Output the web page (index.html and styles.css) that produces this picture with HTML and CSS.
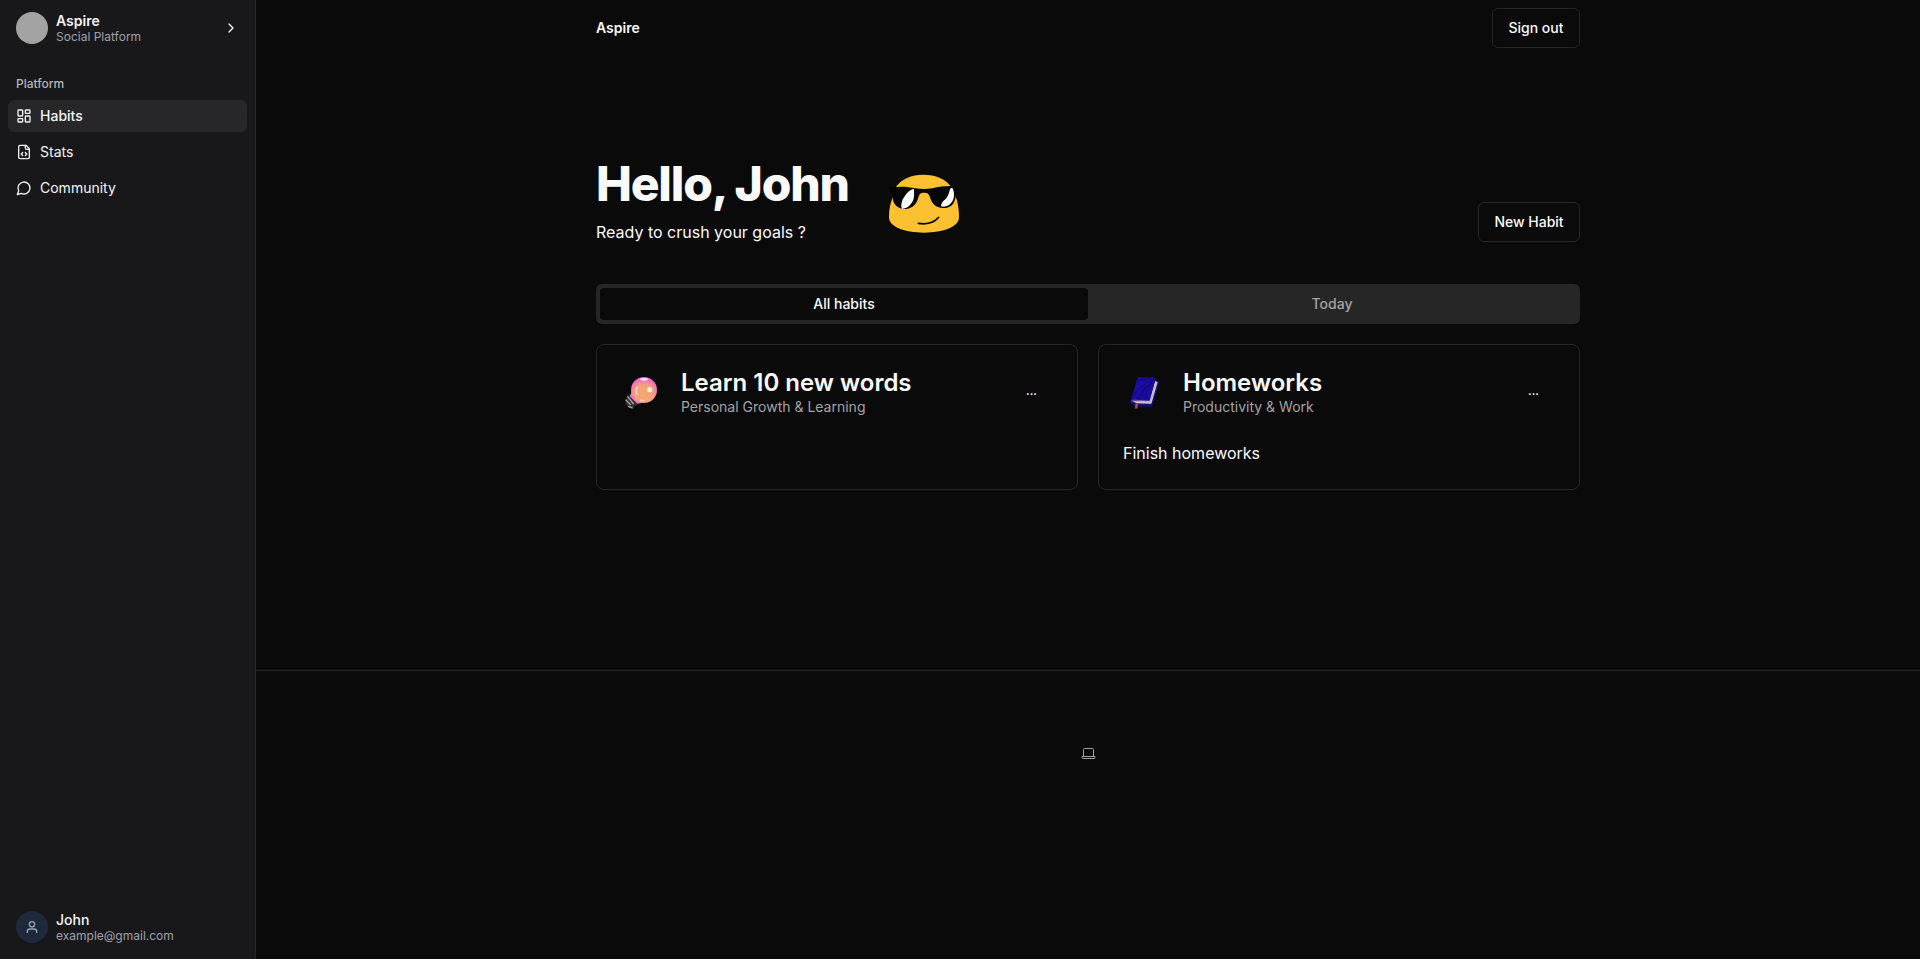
FILE: index.html
```html
<!DOCTYPE html>
<html lang="en">
<head>
<meta charset="utf-8">
<title>Aspire</title>
<link rel="stylesheet" href="styles.css">
</head>
<body>
<div class="app">
  <aside class="sidebar">
    <div class="account">
      <span class="avatar"></span>
      <div class="account-text"><strong class="brand">Aspire</strong><span class="sub social">Social Platform</span></div>
      <svg class="icon chevron" viewBox="0 0 24 24"><path d="m9 18 6-6-6-6"/></svg>
    </div>
    <nav class="nav">
      <div class="nav-label">Platform</div>
      <a class="nav-item active"><svg class="icon" viewBox="0 0 24 24"><rect width="7" height="9" x="3" y="3" rx="1"/><rect width="7" height="5" x="14" y="3" rx="1"/><rect width="7" height="9" x="14" y="12" rx="1"/><rect width="7" height="5" x="3" y="16" rx="1"/></svg><span class="t-habits">Habits</span></a>
      <a class="nav-item"><svg class="icon" viewBox="0 0 24 24"><path d="M10 12.5 8 15l2 2.500M14 12.500l2 2.500-2 2.500M14 2v4a2 2 0 0 0 2 2h4"/><path d="M15 2H6a2 2 0 0 0-2 2v16a2 2 0 0 0 2 2h12a2 2 0 0 0 2-2V7z"/></svg><span class="t-stats">Stats</span></a>
      <a class="nav-item"><svg class="icon" viewBox="0 0 24 24"><path d="M7.900 20A9 9 0 1 0 4 16.100L2 22Z"/></svg><span class="t-community">Community</span></a>
    </nav>
    <div class="account user">
      <span class="avatar avatar-user"><svg viewBox="0 0 24 24"><circle cx="12" cy="8" r="4"/><path d="M5 21v-2a4 4 0 0 1 4-4h6a4 4 0 0 1 4 4v2"/></svg></span>
      <div class="account-text"><span class="name">John</span><span class="sub email">example@gmail.com</span></div>
    </div>
  </aside>
  <div class="page">
    <header class="topbar"><span class="site">Aspire</span><button class="btn signout">Sign out</button></header>
    <main class="main">
      <section class="hero">
        <div class="greeting"><h1>Hello, John</h1><p>Ready to crush your goals ?</p></div>
        <svg class="emoji" viewBox="0 0 270 225">
          <path fill="#fcc131" d="M46 68C64 42 94 29 130 29s69 13 85 39l16 38c3 12 6 31 6 51 0 29-47 46-105 46S27 186 27 157c0-20 3-39 8-51z"/>
          <path fill="#050503" d="M30 67c28-3 52-3 76 3 17 3 34 3 51 0 24-6 48-8 77-6l-1 15-5 4c-1 27-10 43-32 46-25 2-39-9-46-32-4-12-7-14-19-14-10 0-13 4-16 15-7 24-22 34-44 34-23-2-34-17-35-47l-5-4z"/>
          <path fill="#fff" d="M102 71c1 20 1 33-8 44-8 12-17 17-29 16-3-12 0-25 8-36 8-13 17-21 29-24zM217 68c8 15 6 33-2 44-8 11-19 15-32 12 0-9 6-16 14-22 7-7 10-17 12-26 1-6 4-8 8-8z"/>
          <path fill="none" stroke="#080704" stroke-width="5" stroke-linecap="round" d="M115 175c25 4 48-2 61-18"/>
        </svg>
        <button class="btn new">New Habit</button>
      </section>
      <div class="tabs"><button class="tab selected">All habits</button><button class="tab today">Today</button></div>
      <section class="cards">
        <article class="card">
          <div class="card-head">
            <svg class="pic" viewBox="0 0 180 165">
              <defs><radialGradient id="bulb" cx=".5" cy=".65" r=".65"><stop offset="0" stop-color="#f4aa68"/><stop offset=".55" stop-color="#f5a17e"/><stop offset="1" stop-color="#f35bdc"/></radialGradient></defs>
              <path fill="#302e2e" d="m43 87-13 19 4 15 18 9 18-14z"/>
              <path fill="none" stroke="#aaa9a7" stroke-width="4" d="m37 94 19 23M32 104l15 16M39 124l14 5"/>
              <path fill="#ed6fd1" d="m50 81-6 13 23 22 15-2z"/>
              <circle cx="87" cy="75" r="39" fill="url(#bulb)"/>
              <ellipse cx="87" cy="43" rx="12" ry="4" fill="#ffdcf3"/><circle cx="104" cy="74" r="8" fill="#fff0db"/>
              <path fill="none" stroke="#ffd0bd" stroke-width="5" stroke-linecap="round" d="M66 66q-5 10-1 22M78 106l9 2"/>
            </svg>
            <div class="card-text"><h2 class="learn">Learn 10 new words</h2><p class="growth">Personal Growth &amp; Learning</p></div><button class="more">...</button>
          </div>
        </article>
        <article class="card">
          <div class="card-head">
            <svg class="pic" viewBox="0 0 180 165">
              <path fill="#160d76" d="m112 49 14 5-18 65-7 7-48-2-14-11 3-9z"/>
              <path fill="#d8d5d0" d="m114 48 8 3-19 65-44-1-13-6 52-2z"/>
              <path fill="none" stroke="#89858b" stroke-width="1.500" d="m118 51-18 60-46-1"/>
              <path fill="#1b0ca2" d="M61 40q2-4 8-4l38 1q9 1 8 9l-17 57q-2 6-9 6l-39-3-10 4z"/>
              <path fill="none" stroke="#130875" stroke-width="3" d="M64 48c24-10 35 3 14 15S57 84 49 94M73 39c40-5 34 18 17 25S75 84 57 103M110 43c-8 24-27 21-31 38-2 10-8 14-12 23M103 65c-18 10-18 18-16 38"/>
              <path fill="none" stroke="#9d8fba" stroke-width="2" d="M43 109q5-5 14-3l37 2"/>
              <path fill="#bd3f60" d="m56 115 7 2-2 15-4-3-4 4z"/>
            </svg>
            <div class="card-text"><h2 class="home">Homeworks</h2><p class="work">Productivity &amp; Work</p></div><button class="more">...</button>
          </div>
          <p class="desc">Finish homeworks</p>
        </article>
      </section>
    </main>
    <footer class="footer"><svg class="laptop" viewBox="0 0 15 15"><path fill="none" stroke="#a3a3a3" d="M2.500 11V3.500q0-1 1-1h8q1 0 1 1V11M1 10.500h13v1q0 1-1 1H2q-1 0-1-1z"/></svg></footer>
  </div>
</div>
</body>
</html>
```
FILE: styles.css
```css
* { box-sizing: border-box; }
body { margin: 0; background: #0a0a0a; color: #fafafa; font-family: Inter, "Liberation Sans", sans-serif; font-size: 14px; line-height: 20px; }
h1, h2, p { margin: 0; }
button { font: inherit; color: inherit; background: none; border: 0; padding: 0; }
.app { display: flex; height: 959px; }
.sidebar { width: 256px; flex: none; display: flex; flex-direction: column; background: #18181b; border-right: 1px solid #27272a; padding: 0 8px; color: #f4f4f5; }
.account { display: flex; align-items: center; gap: 8px; height: 56px; padding: 0 8px; }
.avatar { width: 32px; height: 32px; border-radius: 50%; background: #a3a3a3; flex: none; }
.avatar-user { display: flex; align-items: center; justify-content: center; background: #1e293b; }
.avatar-user svg { width: 16px; height: 16px; fill: none; stroke: #94a3b8; stroke-width: 2; }
.account-text { display: flex; flex-direction: column; flex: 1; line-height: 17px; white-space: nowrap; }
.brand { font-weight: 600; }
.sub { font-size: 12px; line-height: 16px; color: #a1a1aa; }
.icon { width: 16px; height: 16px; flex: none; fill: none; stroke: currentColor; stroke-width: 2; stroke-linecap: round; stroke-linejoin: round; }
.chevron { margin-right: 0; }
.nav { padding-top: 12px; display: flex; flex-direction: column; gap: 4px; flex: 1; }
.nav-label { height: 28px; line-height: 32px; font-size: 12px; font-weight: 500; padding-left: 8px; color: #b5b5b8; }
.nav-item { height: 32px; display: flex; align-items: center; gap: 8px; padding: 0 8px; border-radius: 6px; }
.active { background: #27272a; font-weight: 500; }
.user { height: 48px; margin-bottom: 8px; }
.name { font-weight: 500; }
.page { flex: 1; display: flex; flex-direction: column; }
.topbar { width: 984px; height: 56px; margin: 0 auto; display: flex; align-items: center; justify-content: space-between; }
.site { font-weight: 600; }
.btn { height: 40px; border: 1px solid #262626; border-radius: 6px; font-weight: 500; }
.signout { width: 88px; }
.new { width: 102px; margin: 42px 0 0 auto; }
.main { width: 984px; height: 614px; margin: 0 auto; padding-top: 104px; }
.hero { display: flex; height: 124px; align-items: flex-start; }
.greeting { width: 284px; white-space: nowrap; }
h1 { font-size: 48px; line-height: 48px; font-weight: 800; letter-spacing: -1.2px; }
.greeting p { margin-top: 12px; font-size: 16px; line-height: 24px; }
.emoji { width: 90px; height: 75px; margin-top: 5px; }
.tabs { height: 40px; padding: 4px; display: grid; grid-template-columns: 1fr 1fr; background: #262626; border-radius: 6px; }
.tab { font-weight: 500; border-radius: 4px; color: #a3a3a3; }
.selected { background: #0a0a0a; color: #fafafa; }
.cards { margin-top: 20px; display: grid; grid-template-columns: 1fr 1fr; gap: 20px; }
.card { height: 146px; border: 1px solid #262626; border-radius: 8px; }
.card-head { display: flex; height: 96px; align-items: flex-start; padding-right: 40px; }
.pic { width: 60px; height: 55px; margin: 20px 6px 0 18px; flex: none; }
.card-text { margin-top: 24px; flex: 1; white-space: nowrap; }
h2 { font-size: 24px; line-height: 28px; font-weight: 600; }
.card-text p { color: #a3a3a3; line-height: 20px; }
.more { margin-top: 38px; font-size: 12px; line-height: 16px; font-weight: 500; }
.desc { font-size: 16px; line-height: 24px; padding-left: 24px; }
.footer { flex: 1; border-top: 1px solid #262626; display: flex; justify-content: center; padding-top: 75px; }
.laptop { width: 15px; height: 15px; }
```
